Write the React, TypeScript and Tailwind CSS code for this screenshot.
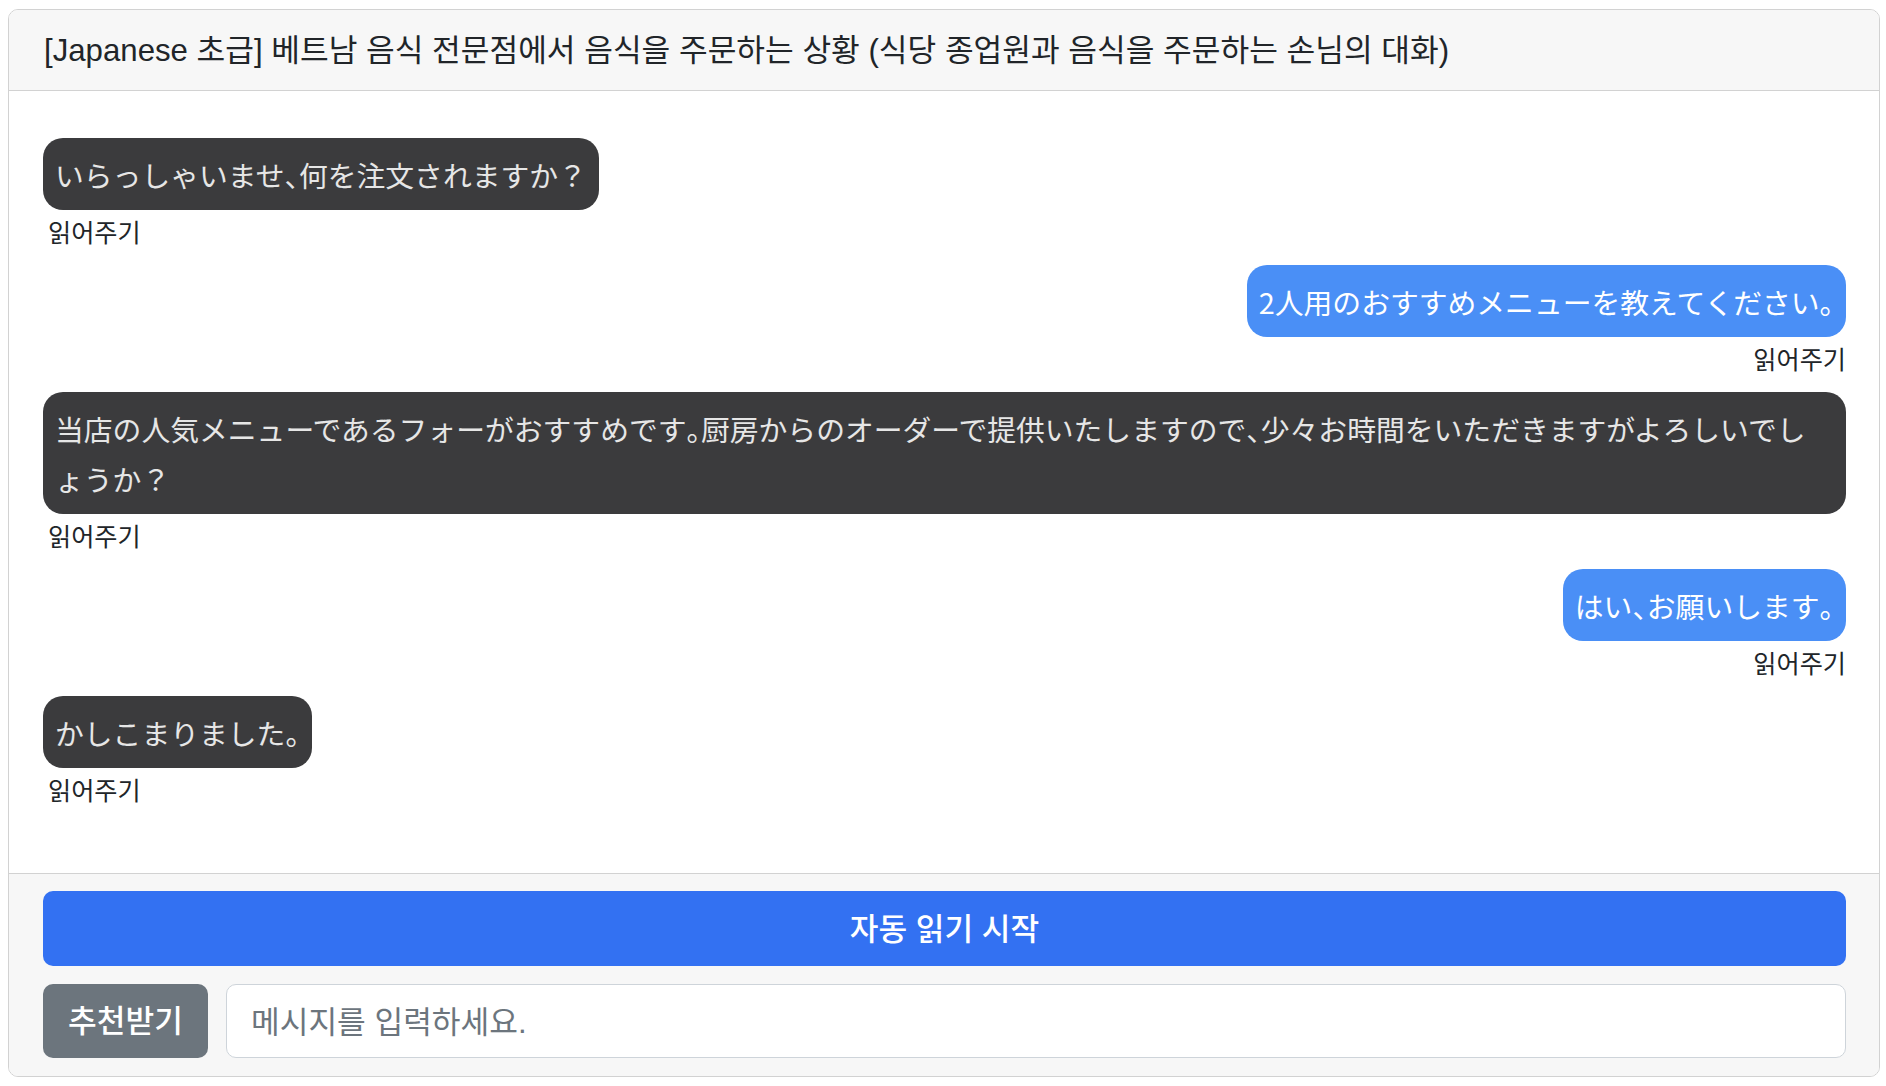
import { Fragment } from 'react';

type Message = {
  from: 'staff' | 'guest';
  text: string;
};

const messages: Message[] = [
  { from: 'staff', text: 'いらっしゃいませ、何を注文されますか？' },
  { from: 'guest', text: '2人用のおすすめメニューを教えてください。' },
  {
    from: 'staff',
    text: '当店の人気メニューであるフォーがおすすめです。厨房からのオーダーで提供いたしますので、少々お時間をいただきますがよろしいでしょうか？',
  },
  { from: 'guest', text: 'はい、お願いします。' },
  { from: 'staff', text: 'かしこまりました。' },
];

const ko = { fontFamily: '"Liberation Sans", "Noto Sans CJK KR", sans-serif' };
const ja = { fontFamily: '"Noto Sans CJK JP", "Noto Sans CJK KR", sans-serif' };

// 、。 are set half width, as in the reference
function JaText({ text }: { text: string }) {
  const parts = text.split(/([、。])/);
  return (
    <>
      {parts.map((p, i) =>
        p === '、' || p === '。' ? (
          <span key={i} className="[font-feature-settings:'halt']">
            {p}
          </span>
        ) : (
          <Fragment key={i}>{p}</Fragment>
        )
      )}
    </>
  );
}

function Bubble({ msg }: { msg: Message }) {
  const mine = msg.from === 'guest';
  return (
    <div className={`flex flex-col mb-[15px] ${mine ? 'items-end' : 'items-start'}`}>
      <div
        style={ja}
        className={`max-w-full rounded-[20px] px-[12px] pt-[12px] pb-[10px] text-[28.8px] leading-[50px] [line-break:loose] ${
          mine ? 'bg-[#4a8ff6] text-white' : 'bg-[#3b3b3d] text-[#e6e6e6]'
        }`}
      >
        <JaText text={msg.text} />
      </div>
      <button
        style={ko}
        className={`mt-[7px] text-[25.2px] leading-[33px] text-[#212529] ${mine ? '' : 'ml-[5px]'}`}
      >
        읽어주기
      </button>
    </div>
  );
}

export default function App() {
  return (
    <div className="min-h-screen bg-white pt-[9px] pl-2 pr-[6px]">
      <div className="rounded-[10px] border border-[#d2d2d2] overflow-hidden">
        <div
          style={ko}
          className="h-[81px] flex items-center pt-[3px] px-[35px] bg-[#f7f7f7] border-b border-[#d2d2d2] text-[31.2px] text-[#212529] whitespace-nowrap"
        >
          [Japanese 초급] 베트남 음식 전문점에서 음식을 주문하는 상황 (식당 종업원과 음식을 주문하는 손님의 대화)
        </div>

        <div className="pt-[47px] pb-[50px] pl-[34px] pr-[33px] bg-white">
          {messages.map((m, i) => (
            <Bubble key={i} msg={m} />
          ))}
        </div>

        <div className="bg-[#f7f7f7] border-t border-[#d2d2d2] pt-[17px] pb-[18px] pl-[34px] pr-[33px] flex flex-col gap-[18px]">
          <button
            style={ko}
            className="w-full h-[75px] pt-[4px] rounded-[10px] bg-[#3371f2] text-white text-[31.2px] font-medium"
          >
            자동 읽기 시작
          </button>
          <div className="flex gap-[18px]">
            <button
              style={ko}
              className="w-[165px] h-[74px] pt-[3px] shrink-0 rounded-[10px] bg-[#6c757d] text-white text-[31.2px] font-medium"
            >
              추천받기
            </button>
            <input
              style={ko}
              placeholder="메시지를 입력하세요."
              className="flex-1 h-[74px] rounded-[10px] border border-[#ced4da] bg-white px-[24px] pt-[3px] text-[31.2px] text-[#212529] placeholder:text-[#6c757d] outline-none"
            />
          </div>
        </div>
      </div>
    </div>
  );
}
